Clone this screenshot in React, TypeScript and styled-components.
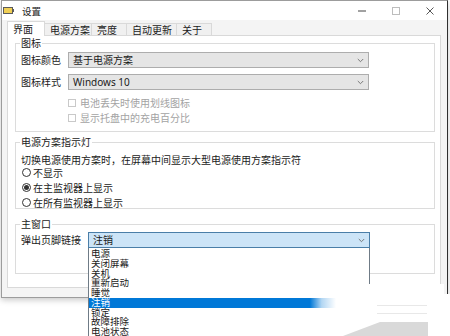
import React from 'react';
import styled, { createGlobalStyle } from 'styled-components';

const GlobalStyle = createGlobalStyle`
  html, body {
    margin: 0;
    padding: 0;
    background: #ffffff;
  }
  body {
    font-family: "Noto Sans CJK SC", "Noto Sans", sans-serif;
    font-size: 10px;
    color: #1b1b1b;
  }
  * {
    box-sizing: border-box;
  }
`;

const Page = styled.div`
  position: relative;
  width: 450px;
  height: 336px;
  overflow: hidden;
  background: #ffffff;
`;

const Window = styled.div`
  margin-left: 1px;
  width: 447px;
  height: 298px;
  display: flex;
  flex-direction: column;
  background: #f4f4f4;
  border: 1px solid #9c9c9c;
  border-right-color: #2f2f2f;
  box-shadow: 0 2px 6px rgba(0, 0, 0, 0.22);
`;

const TitleBar = styled.div`
  height: 19px;
  display: flex;
  align-items: center;
  padding-left: 1px;
  background: #ffffff;
`;

const TitleText = styled.span`
  margin-left: 8px;
  font-size: 9.5px;
  line-height: 10px;
  color: #222;
`;

const Controls = styled.div`
  margin-left: auto;
  display: flex;
  height: 100%;
`;

const ControlButton = styled.div`
  width: 34px;
  height: 100%;
  display: flex;
  align-items: center;
  justify-content: center;
`;

const Body = styled.div`
  flex: 1;
  padding: 1px 6px 0 5px;
`;

const TabRow = styled.div`
  position: relative;
  z-index: 1;
  display: flex;
  align-items: flex-end;
  height: 15px;
  margin-bottom: -1px;
`;

const Tab = styled.div<{ $active?: boolean; $w: number }>`
  width: ${p => p.$w}px;
  height: ${p => (p.$active ? 15 : 13)}px;
  padding-left: 5px;
  display: flex;
  align-items: center;
  font-size: 10px;
  line-height: 10px;
  background: ${p => (p.$active ? '#ffffff' : '#f0f0f0')};
  border: 1px solid #d9d9d9;
  border-bottom: ${p => (p.$active ? 'none' : '1px solid #d9d9d9')};
  margin-left: ${p => (p.$active ? 0 : -1)}px;
`;

const Panel = styled.div`
  height: 253px;
  background: #ffffff;
  border: 1px solid #d9d9d9;
  padding: 0 5px 0 7px;
`;

const Group = styled.div<{ $h: number; $mt: number }>`
  height: ${p => p.$h}px;
  margin-top: ${p => p.$mt}px;
  border: 1px solid #dcdcdc;
  padding: 0 5px;
  display: flex;
  flex-direction: column;
`;

const GroupTitle = styled.div`
  width: fit-content;
  margin: -6px 0 0 -1px;
  padding: 0 1px;
  background: #ffffff;
  line-height: 10px;
  font-size: 10px;
`;

const FieldRow = styled.div<{ $mt: number }>`
  display: flex;
  align-items: center;
  height: 16px;
  margin-top: ${p => p.$mt}px;
`;

const FieldLabel = styled.div<{ $w: number }>`
  width: ${p => p.$w}px;
  flex-shrink: 0;
  line-height: 10px;
`;

const Select = styled.div<{ $focused?: boolean }>`
  width: 301px;
  height: 16px;
  display: flex;
  align-items: center;
  padding: 0 4px 0 4px;
  background: ${p => (p.$focused ? '#cce4f7' : '#e5e5e5')};
  border: 1px solid ${p => (p.$focused ? '#4a7ea8' : '#adadad')};
  line-height: 10px;
`;

const SelectValue = styled.span`
  flex: 1;
  font-family: "Noto Sans", "Noto Sans CJK SC", sans-serif;
`;

const CheckRow = styled.div<{ $mt?: number }>`
  display: flex;
  align-items: center;
  height: 15px;
  margin-top: ${p => p.$mt ?? 0}px;
  padding-left: 47px;
  color: #a3a3a3;
`;

const CheckBox = styled.span`
  width: 8px;
  height: 8px;
  border: 1px solid #c9c9c9;
  background: #ffffff;
  margin-right: 4px;
`;

const Hint = styled.div`
  height: 12px;
  margin-top: 6px;
  display: flex;
  align-items: center;
  white-space: nowrap;
`;

const RadioRow = styled.div`
  height: 15px;
  display: flex;
  align-items: center;
  padding-left: 1px;
  white-space: nowrap;
`;

const RadioCircle = styled.span<{ $on?: boolean }>`
  width: 9px;
  height: 9px;
  border-radius: 50%;
  border: 1px solid #333333;
  margin-right: 2px;
  display: flex;
  align-items: center;
  justify-content: center;

  &::after {
    content: '';
    width: 5px;
    height: 5px;
    border-radius: 50%;
    background: ${p => (p.$on ? '#333333' : 'transparent')};
  }
`;

const DropList = styled.div`
  position: absolute;
  z-index: 5;
  left: 88px;
  top: 248px;
  width: 282px;
  height: 100px;
  background: #ffffff;
  border: 1px solid #6f7b86;
  border-top: none;
  padding-top: 1px;
`;

const DropItem = styled.div<{ $sel?: boolean }>`
  height: 9.75px;
  line-height: 9.75px;
  font-size: 9.5px;
  padding-left: 2px;
  background: ${p => (p.$sel ? '#0078d7' : 'transparent')};
  color: ${p => (p.$sel ? '#ffffff' : '#1b1b1b')};
`;

const Tear = styled.svg`
  position: absolute;
  z-index: 6;
  left: 300px;
  top: 278px;
`;

const Chevron = () => (
  <svg width="7" height="5" viewBox="0 0 7 5">
    <path d="M0.8 1 L3.5 3.7 L6.2 1" fill="none" stroke="#6d6d6d" strokeWidth="0.9" />
  </svg>
);

const tabs = [
  { name: '界面', w: 38 },
  { name: '电源方案', w: 48 },
  { name: '亮度', w: 36 },
  { name: '自动更新', w: 51 },
  { name: '关于', w: 36 },
];

const listItems = ['电源', '关闭屏幕', '关机', '重新启动', '睡觉', '注销', '锁定', '故障排除', '电池状态', '设置'];

export default function App() {
  return (
    <Page>
      <GlobalStyle />
      <Window>
        <TitleBar>
          <svg width="11" height="7" viewBox="0 0 11 7">
            <rect x="0.5" y="0.5" width="9" height="6" fill="#f0cf55" stroke="#5b5b5b" />
            <rect x="9.5" y="2" width="1.5" height="3" fill="#5b5b5b" />
          </svg>
          <TitleText>设置</TitleText>
          <Controls>
            <ControlButton>
              <svg width="8" height="2" viewBox="0 0 8 2">
                <line x1="0" y1="1" x2="8" y2="1" stroke="#444" strokeWidth="1" />
              </svg>
            </ControlButton>
            <ControlButton>
              <svg width="8" height="8" viewBox="0 0 8 8">
                <rect x="0.5" y="0.5" width="7" height="7" fill="none" stroke="#bdbdbd" />
              </svg>
            </ControlButton>
            <ControlButton>
              <svg width="8" height="8" viewBox="0 0 8 8">
                <path d="M0.5 0.5 L7.5 7.5 M7.5 0.5 L0.5 7.5" stroke="#444" strokeWidth="0.9" />
              </svg>
            </ControlButton>
          </Controls>
        </TitleBar>
        <Body>
          <TabRow>
            {tabs.map((t, i) => (
              <Tab key={t.name} $active={i === 0} $w={t.w}>
                {t.name}
              </Tab>
            ))}
          </TabRow>
          <Panel>
            <Group $h={89} $mt={7}>
              <GroupTitle>图标</GroupTitle>
              <FieldRow $mt={4}>
                <FieldLabel $w={47}>图标颜色</FieldLabel>
                <Select>
                  <SelectValue>基于电源方案</SelectValue>
                  <Chevron />
                </Select>
              </FieldRow>
              <FieldRow $mt={6}>
                <FieldLabel $w={47}>图标样式</FieldLabel>
                <Select>
                  <SelectValue>Windows 10</SelectValue>
                  <Chevron />
                </Select>
              </FieldRow>
              <CheckRow $mt={5}>
                <CheckBox />
                电池丢失时使用划线图标
              </CheckRow>
              <CheckRow>
                <CheckBox />
                显示托盘中的充电百分比
              </CheckRow>
            </Group>
            <Group $h={67} $mt={10}>
              <GroupTitle>电源方案指示灯</GroupTitle>
              <Hint>切换电源使用方案时，在屏幕中间显示大型电源使用方案指示符</Hint>
              <RadioRow>
                <RadioCircle />
                不显示
              </RadioRow>
              <RadioRow>
                <RadioCircle $on />
                在主监视器上显示
              </RadioRow>
              <RadioRow>
                <RadioCircle />
                在所有监视器上显示
              </RadioRow>
            </Group>
            <Group $h={50} $mt={15}>
              <GroupTitle>主窗口</GroupTitle>
              <FieldRow $mt={3}>
                <FieldLabel $w={67}>弹出页脚链接</FieldLabel>
                <Select $focused style={{ width: 282 }}>
                  <SelectValue>注销</SelectValue>
                  <Chevron />
                </Select>
              </FieldRow>
            </Group>
          </Panel>
        </Body>
      </Window>
      <DropList>
        {listItems.map(item => (
          <DropItem key={item} $sel={item === '注销'}>
            {item}
          </DropItem>
        ))}
      </DropList>
      <Tear width="150" height="58" viewBox="300 278 150 58">
        <defs>
          <linearGradient id="fade" x1="310" y1="0" x2="336" y2="0" gradientUnits="userSpaceOnUse">
            <stop offset="0" stopColor="#ffffff" stopOpacity="0" />
            <stop offset="0.45" stopColor="#ffffff" stopOpacity="0.7" />
            <stop offset="1" stopColor="#ffffff" stopOpacity="1" />
          </linearGradient>
        </defs>
        <polygon points="310,284 444,284 444,294 450,294 450,336 310,336" fill="url(#fade)" />
        <line x1="377" y1="305.5" x2="427" y2="305.5" stroke="#e8e8e8" />
        <line x1="377" y1="313.5" x2="427" y2="313.5" stroke="#e8e8e8" />
        <polygon points="343,336 380,322 428,322 428,336" fill="#d9d9d9" />
      </Tear>
    </Page>
  );
}
